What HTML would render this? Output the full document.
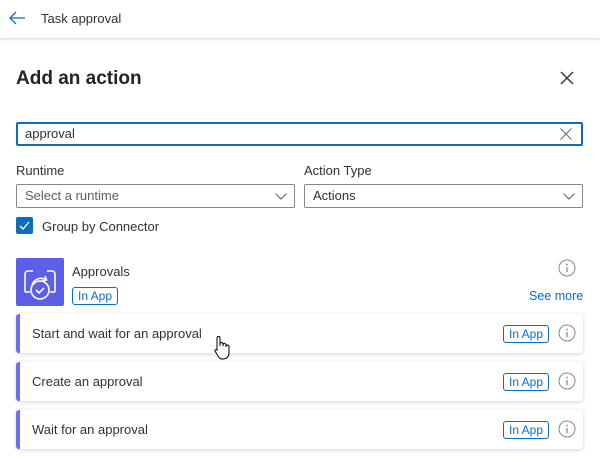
<!DOCTYPE html>
<html><head><style>
*{box-sizing:border-box;margin:0;padding:0}
body{width:600px;height:462px;background:#fff;font-family:"Liberation Sans",sans-serif;color:#323130;position:relative;overflow:hidden}
.a{position:absolute}
.hdr{left:0;top:0;width:600px;height:38px;background:#fff;box-shadow:0 1px 3px rgba(0,0,0,.18)}
.t13{font-size:13px}
.badge{position:absolute;height:18px;border:1px solid #0f6cbd;border-radius:3px;color:#0f6cbd;font-size:12px;line-height:16px;padding:0 5px}
.card{position:absolute;left:16px;width:567px;height:39px;background:#fff;border-radius:3px;box-shadow:0 1px 4px rgba(0,0,0,.18);border-left:4px solid #6d6ef0}
.card span.l{position:absolute;left:12px;top:12px;font-size:13px;color:#323130}
.dd{position:absolute;top:184px;height:24px;border:1px solid #8a8886;border-radius:2px;font-size:13px;line-height:22px;padding-left:8px}
</style></head><body>
<div class="a hdr">
<svg class="a" style="left:8px;top:10px" width="18" height="16" viewBox="0 0 18 16"><path d="M17 8H2M8 2L2 8l6 6" stroke="#0f6cbd" stroke-width="1.3" fill="none"/></svg>
<div class="a t13" style="left:41px;top:11px;color:#323130">Task approval</div>
</div>
<div class="a" style="left:16px;top:68px;font-size:19px;font-weight:bold;color:#242424">Add an action</div>
<svg class="a" style="left:560px;top:71px" width="14" height="14"><path d="M1 1L13 13M13 1L1 13" stroke="#323130" stroke-width="1.4"/></svg>
<div class="a" style="left:16px;top:122px;width:567px;height:24px;border:2px solid #0f6cbd;border-radius:2px"></div>
<div class="a t13" style="left:25px;top:126px">approval</div>
<svg class="a" style="left:560px;top:128px" width="12" height="12"><path d="M0.5 0.5L11.5 11.5M11.5 0.5L0.5 11.5" stroke="#666" stroke-width="1"/></svg>
<div class="a t13" style="left:16px;top:163px">Runtime</div>
<div class="a t13" style="left:304px;top:163px">Action Type</div>
<div class="dd" style="left:16px;width:279px;color:#605e5c">Select a runtime</div>
<div class="dd" style="left:304px;width:279px">Actions</div>
<svg class="a" style="left:275px;top:193px" width="12" height="7"><path d="M0.5 0.5L6 6l5.5-5.5" stroke="#605e5c" fill="none"/></svg>
<svg class="a" style="left:563px;top:193px" width="12" height="7"><path d="M0.5 0.5L6 6l5.5-5.5" stroke="#605e5c" fill="none"/></svg>
<div class="a" style="left:16px;top:217px;width:17px;height:17px;background:#0f6cbd;border-radius:2px"></div>
<svg class="a" style="left:16px;top:217px" width="17" height="17"><path d="M4 9l3 3 6-7" stroke="#fff" stroke-width="1.3" fill="none"/></svg>
<div class="a t13" style="left:42px;top:219px">Group by Connector</div>
<div class="a" style="left:16px;top:258px;width:48px;height:48px;background:#5d5fe6;border-radius:2px"></div>
<svg class="a" style="left:16px;top:258px" width="48" height="48" viewBox="0 0 48 48" fill="none" stroke="#fff" stroke-width="1.6"><path d="M9 34V16a3 3 0 0 1 3-3h5M39 34V16a3 3 0 0 0-3-3h-5M9 34h5M39 34h-5"/><circle cx="24" cy="32" r="9"/><path d="M20 32l3 3 5-5M16 28a9 9 0 0 1 14-6M29 18l1.5 4-4 1"/></svg>
<div class="a t13" style="left:72px;top:264px;color:#323130">Approvals</div>
<div class="badge" style="left:72px;top:287px">In App</div>
<svg class="a" style="left:558px;top:259px" width="18" height="18"><circle cx="9" cy="9" r="8" stroke="#8a8886" fill="none"/><path d="M9 8v5" stroke="#8a8886" stroke-width="1.3"/><circle cx="9" cy="5.5" r="0.9" fill="#8a8886"/></svg>
<div class="a" style="left:529px;top:289px;color:#0f6cbd;font-size:12.5px">See more</div>

<div class="card" style="top:314px"><span class="l">Start and wait for an approval</span></div>
<div class="card" style="top:362px"><span class="l">Create an approval</span></div>
<div class="card" style="top:410px"><span class="l">Wait for an approval</span></div>
<div class="badge" style="left:503px;top:325px">In App</div>
<div class="badge" style="left:503px;top:373px">In App</div>
<div class="badge" style="left:503px;top:421px">In App</div>
<svg class="a" style="left:558px;top:324px" width="18" height="18"><circle cx="9" cy="9" r="8" stroke="#8a8886" fill="none"/><path d="M9 8v5" stroke="#8a8886" stroke-width="1.3"/><circle cx="9" cy="5.5" r="0.9" fill="#8a8886"/></svg>
<svg class="a" style="left:558px;top:372px" width="18" height="18"><circle cx="9" cy="9" r="8" stroke="#8a8886" fill="none"/><path d="M9 8v5" stroke="#8a8886" stroke-width="1.3"/><circle cx="9" cy="5.5" r="0.9" fill="#8a8886"/></svg>
<svg class="a" style="left:558px;top:420px" width="18" height="18"><circle cx="9" cy="9" r="8" stroke="#8a8886" fill="none"/><path d="M9 8v5" stroke="#8a8886" stroke-width="1.3"/><circle cx="9" cy="5.5" r="0.9" fill="#8a8886"/></svg>
<svg class="a" style="left:212px;top:335px" width="20" height="26" viewBox="0 0 20 26"><path d="M5 14V3a1.5 1.5 0 0 1 3 0v8V9a1.5 1.5 0 0 1 3 0v2-1a1.5 1.5 0 0 1 3 0v2-.5a1.5 1.5 0 0 1 3 0V18c0 3-2 6-6 6H10c-2 0-3-1-4-3l-3-5c-.5-1 1-2 2-1z" fill="#fff" stroke="#000" stroke-width="1"/></svg>
</body></html>
